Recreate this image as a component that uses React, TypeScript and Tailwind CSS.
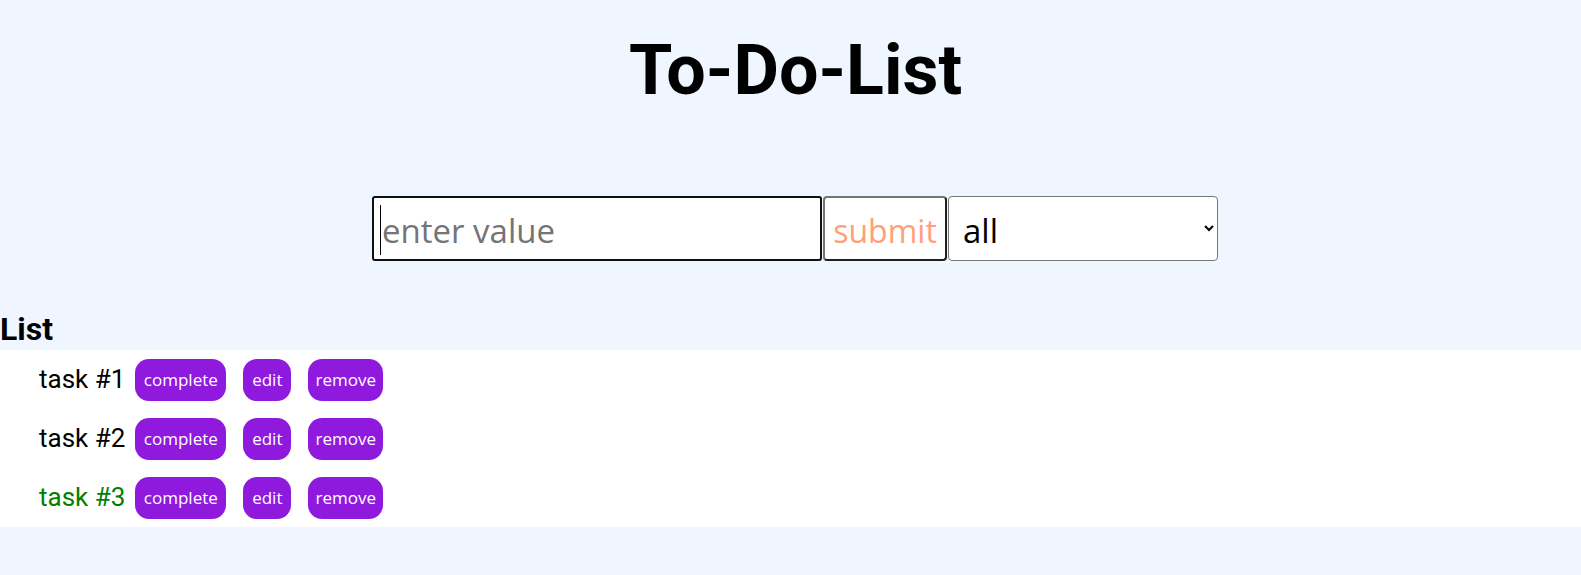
import React from "react";

const tasks = [
  { name: "task #1", done: false },
  { name: "task #2", done: false },
  { name: "task #3", done: true },
];

const App = () => {
  return (
    <div className="min-h-screen bg-[#eff6ff] font-['Roboto',sans-serif] text-black">
      <h1 className="m-0 pt-[28px] pl-[10px] text-center text-[70px] leading-[84px] font-bold">
        To-Do-List
      </h1>

      <form
        className="mt-[84px] flex justify-center gap-[1px] pl-[9px] font-['Open_Sans',sans-serif]"
        onSubmit={(e) => e.preventDefault()}
      >
        <div className="relative">
          <input
            type="text"
            placeholder="enter value"
            className="h-[65px] w-[450px] rounded-[3px] border-2 border-[#101010] bg-white pt-[4px] pl-[8px] text-[33px] text-black outline-none placeholder:text-[#757575]"
          />
          <span className="absolute left-[8px] top-[9px] h-[50px] w-[1px] bg-black"></span>
        </div>
        <button
          type="submit"
          className="h-[65px] w-[124px] rounded-[4px] border-2 border-t-[#767676] border-l-[#767676] border-b-[#202020] border-r-[#202020] bg-white pt-[4px] text-[32px] text-[#ffa07a]"
        >
          submit
        </button>
        <select className="h-[65px] w-[270px] rounded-[4px] border border-[#767676] bg-white pt-[4px] pl-[10px] text-[33px] text-black">
          <option>all</option>
          <option>completed</option>
          <option>uncompleted</option>
        </select>
      </form>

      <h2 className="m-0 mt-[48px] text-[32px] leading-[40px] font-bold">
        List
      </h2>

      <ul className="mt-[1px] bg-white">
        {tasks.map((task, index) => (
          <li key={index} className="flex h-[59px] items-center pl-[39px]">
            <span
              className={
                task.done
                  ? "text-[26px] text-[#008000]"
                  : "text-[26px] text-black"
              }
            >
              {task.name}
            </span>
            <div className="ml-[10px] flex gap-[17px] font-['Open_Sans',sans-serif]">
              <button className="h-[42px] w-[91px] rounded-[14px] bg-[#8f1ade] text-[17px] text-white">
                complete
              </button>
              <button className="h-[42px] w-[48px] rounded-[14px] bg-[#8f1ade] text-[17px] text-white">
                edit
              </button>
              <button className="h-[42px] w-[75px] rounded-[14px] bg-[#8f1ade] text-[17px] text-white">
                remove
              </button>
            </div>
          </li>
        ))}
      </ul>
    </div>
  );
};

export default App;
